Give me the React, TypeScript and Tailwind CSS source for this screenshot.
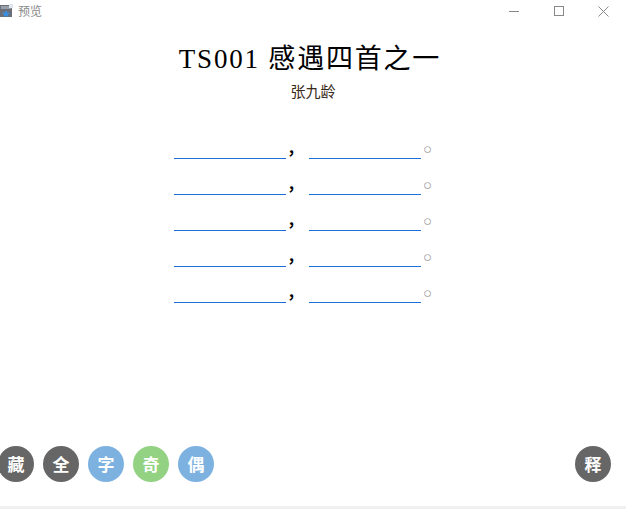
import React from 'react';

const serif = { fontFamily: '"Liberation Serif", "Noto Sans CJK SC", serif' };

function TitleBar() {
  return (
    <div className="flex h-[22px] items-center justify-between bg-white">
      <div className="flex items-center gap-[5px]">
        <svg width="13" height="14" viewBox="0 0 13 14">
          <rect x="0" y="1" width="12" height="12" fill="#6b6f78" />
          <rect x="1" y="2" width="10" height="3" fill="#9aa0aa" />
          <path d="M6 6 L7.3 8.6 L10 9 L8 10.8 L8.5 13 L6 11.8 L3.5 13 L4 10.8 L2 9 L4.7 8.6 Z" fill="#3c8fe0" />
          <rect x="9" y="0" width="4" height="4" fill="#dfe6ef" />
        </svg>
        <span className="text-[12px] text-[#8a8a8a]" style={{ fontFamily: '"Noto Sans CJK SC", sans-serif' }}>
          预览
        </span>
      </div>
      <div className="flex items-center">
        <div className="flex h-[22px] w-[45px] items-center justify-center">
          <div className="h-px w-[10px] bg-[#888]" />
        </div>
        <div className="flex h-[22px] w-[45px] items-center justify-center">
          <div className="h-[10px] w-[10px] border border-[#888]" />
        </div>
        <div className="flex h-[22px] w-[45px] items-center justify-center">
          <svg width="11" height="11" viewBox="0 0 11 11">
            <path d="M0.5 0.5 L10.5 10.5 M10.5 0.5 L0.5 10.5" stroke="#888" strokeWidth="1" />
          </svg>
        </div>
      </div>
    </div>
  );
}

function Row() {
  return (
    <div className="flex h-[36px] items-end" style={serif}>
      <div className="h-[20px] w-[112px] border-b border-[#1a6fd6]" />
      <span className="w-[23px] pl-px text-[16px] font-bold leading-[20px] text-black">，</span>
      <div className="h-[20px] w-[112px] border-b border-[#1a6fd6]" />
      <span className="pl-[2px] text-[15px] leading-[20px] text-[#999]">○</span>
    </div>
  );
}

function Btn({ ch, bg }: { ch: string; bg: string }) {
  return (
    <div
      className={`flex h-9 w-9 items-center justify-center rounded-full text-[17px] font-bold text-white ${bg}`}
      style={{ fontFamily: '"Noto Sans CJK SC", sans-serif' }}
    >
      {ch}
    </div>
  );
}

export default function App() {
  return (
    <div className="flex h-[509px] w-[626px] flex-col bg-white">
      <TitleBar />
      <div className="flex flex-1 flex-col items-center">
        <h1 className="mt-[20px] mr-[6px] text-[27px] leading-[34px] tracking-[1.8px] text-black" style={serif}>
          TS001 感遇四首之一
        </h1>
        <div className="mt-[6px] text-[15px] leading-[20px] text-[#3a2a1a]" style={serif}>
          张九龄
        </div>
        <div className="mt-[21px] ml-[174px] flex flex-col self-start">
          <Row />
          <Row />
          <Row />
          <Row />
          <Row />
        </div>
      </div>
      <div className="flex items-center justify-between pb-[24px] pr-[15px]">
        <div className="-ml-[2px] flex gap-[9px]">
          <Btn ch="藏" bg="bg-[#666666]" />
          <Btn ch="全" bg="bg-[#666666]" />
          <Btn ch="字" bg="bg-[#7cb1e0]" />
          <Btn ch="奇" bg="bg-[#92d282]" />
          <Btn ch="偶" bg="bg-[#7cb1e0]" />
        </div>
        <Btn ch="释" bg="bg-[#666666]" />
      </div>
      <div className="h-[3px] bg-[#f0f0f0]" />
    </div>
  );
}
